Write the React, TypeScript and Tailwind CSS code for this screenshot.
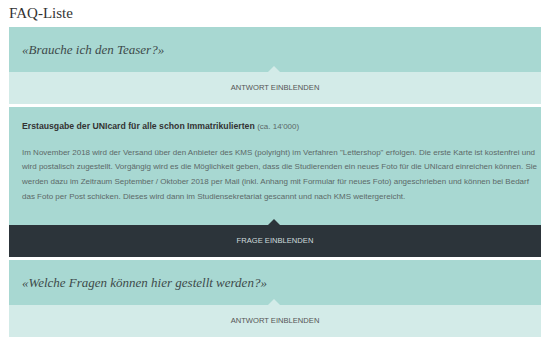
export default function App() {
  const serif = { fontFamily: '"Liberation Serif", "DejaVu Serif", serif' }
  const sans = { fontFamily: '"Liberation Sans", Arial, sans-serif' }

  return (
    <div className="w-[550px] h-[339px] bg-white overflow-hidden" style={sans}>
      <h1 className="pl-[9px] pt-[4px] h-[27px] text-[15px] leading-[19px] text-[#333]" style={serif}>
        FAQ-Liste
      </h1>

      <div className="mx-[9px] flex flex-col gap-[3px]">
        {/* Frage 1 */}
        <div>
          <div className="relative h-[45px] bg-[#a8d8d2] flex items-center px-[13px]">
            <p className="italic text-[13px] text-[#3d4a4a]" style={serif}>
              «Brauche ich den Teaser?»
            </p>
            <div className="absolute bottom-0 left-[259px] w-0 h-0 border-l-[6px] border-r-[6px] border-b-[6px] border-l-transparent border-r-transparent border-b-[#d3ebe8]" />
          </div>
          <div className="h-[32px] bg-[#d3ebe8] flex items-center justify-center text-[7.6px] text-[#555]">
            ANTWORT EINBLENDEN
          </div>
        </div>

        {/* Frage 2 (offen) */}
        <div>
          <div className="relative bg-[#a8d8d2] px-[13px] pt-[12px] text-[8px] text-[#5c6968] leading-[14.7px] h-[118px] whitespace-nowrap overflow-hidden">
            <p className="text-[#333] text-[8.7px]">
              <span className="font-bold">Erstausgabe der UNIcard für alle schon Immatrikulierten</span>{' '}
              <span className="text-[#5c6968] text-[8px]">(ca. 14'000)</span>
            </p>
            <p className="mt-[11px]">
              Im November 2018 wird der Versand über den Anbieter des KMS (polyright) im Verfahren "Lettershop" erfolgen. Die erste Karte ist kostenfrei und
              <br />
              wird postalisch zugestellt. Vorgängig wird es die Möglichkeit geben, dass die Studierenden ein neues Foto für die UNIcard einreichen können. Sie
              <br />
              werden dazu im Zeitraum September / Oktober 2018 per Mail (inkl. Anhang mit Formular für neues Foto) angeschrieben und können bei Bedarf
              <br />
              das Foto per Post schicken. Dieses wird dann im Studiensekretariat gescannt und nach KMS weitergereicht.
            </p>
            <div className="absolute bottom-0 left-[259px] w-0 h-0 border-l-[6px] border-r-[6px] border-b-[6px] border-l-transparent border-r-transparent border-b-[#2c343a]" />
          </div>
          <div className="h-[32px] bg-[#2c343a] flex items-center justify-center text-[7.6px] text-[#cfdcdc]">
            FRAGE EINBLENDEN
          </div>
        </div>

        {/* Frage 3 */}
        <div>
          <div className="relative h-[45px] bg-[#a8d8d2] flex items-center px-[13px]">
            <p className="italic text-[13px] text-[#3d4a4a]" style={serif}>
              «Welche Fragen können hier gestellt werden?»
            </p>
            <div className="absolute bottom-0 left-[259px] w-0 h-0 border-l-[6px] border-r-[6px] border-b-[6px] border-l-transparent border-r-transparent border-b-[#d3ebe8]" />
          </div>
          <div className="h-[32px] bg-[#d3ebe8] flex items-center justify-center text-[7.6px] text-[#555]">
            ANTWORT EINBLENDEN
          </div>
        </div>
      </div>
    </div>
  )
}
